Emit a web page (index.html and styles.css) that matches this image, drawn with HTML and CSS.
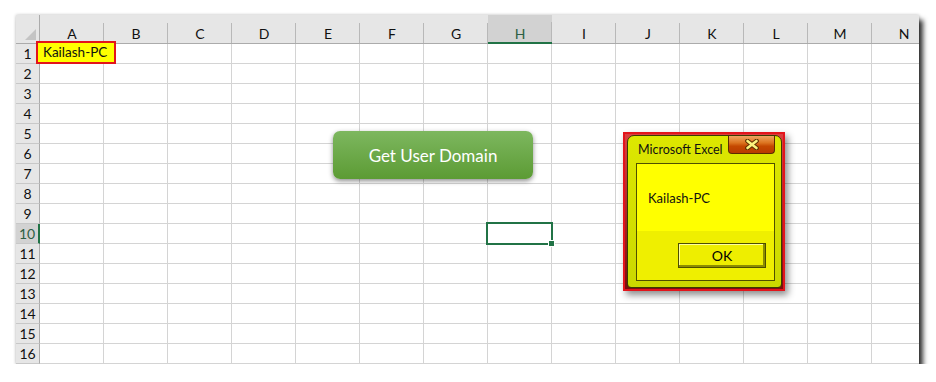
FILE: index.html
```html
<!DOCTYPE html>
<html lang="en">
  <head>
    <meta charset="UTF-8" />
    <meta name="viewport" content="width=device-width, initial-scale=1.0" />
    <title>Get User Domain</title>
    <link rel="stylesheet" href="styles.css">
  </head>
  <body>
    <div class="sheet">
      <div class="grid" id="grid"></div>

      <div class="cell-note">Kailash-PC</div>
      <div class="selection"><span class="fill-handle"></span></div>

      <button class="macro-btn">Get User Domain</button>

      <div class="msgbox">
        <div class="msg-window">
          <div class="msg-title">
            <span>Microsoft Excel</span>
            <span class="msg-close">
              <svg width="14" height="11" viewBox="0 0 14 11">
                <path d="M2.5 2 L11.5 9 M11.5 2 L2.5 9" stroke="#5a2c00" stroke-width="4.6" stroke-linecap="round" />
                <path d="M2.5 2 L11.5 9 M11.5 2 L2.5 9" stroke="#fbf27e" stroke-width="2.6" stroke-linecap="round" />
              </svg>
            </span>
          </div>
          <div class="msg-client">
            <div class="msg-text">Kailash-PC</div>
            <div class="msg-actions">
              <button class="msg-ok">OK</button>
            </div>
          </div>
        </div>
      </div>
    </div>

    <script>
      const grid = document.getElementById("grid");
      const cols = "ABCDEFGHIJKLMN".split("");
      const activeCol = "H";
      const activeRow = 10;

      let html = `<div class="corner"></div>`;
      cols.forEach((c) => {
        html += `<div class="col-head${c === activeCol ? " active" : ""}">${c}</div>`;
      });
      for (let r = 1; r <= 16; r++) {
        html += `<div class="row-head${r === activeRow ? " active" : ""}">${r}</div>`;
        cols.forEach(() => {
          html += `<div class="cell"></div>`;
        });
      }
      grid.innerHTML = html;
    </script>
  </body>
</html>
```

FILE: styles.css
```css
body {
  margin: 0;
  background-color: white;
  font-family: Lato, "Open Sans", sans-serif;
  font-size: 14px;
  color: #111;
}

.sheet {
  position: relative;
  width: 903px;
  height: 349px;
  margin: 15px 0 0 16px;
  overflow: hidden;
  background-color: white;
  box-shadow: 0 0 3px rgba(0, 0, 0, 0.25), 4px 5px 5px rgba(0, 0, 0, 0.8);
}

.grid {
  display: grid;
  grid-template-columns: 24px repeat(14, 64px);
  grid-template-rows: 29px repeat(16, 20px);
}

.grid > div {
  box-sizing: border-box;
}

.corner {
  position: relative;
  background-color: #e6e6e6;
  border-right: 1px solid #ababab;
  border-bottom: 1px solid #ababab;
}

.corner::after {
  content: "";
  position: absolute;
  right: 3px;
  bottom: 3px;
  width: 11px;
  height: 11px;
  background-color: #c4c4c4;
  clip-path: polygon(100% 0, 100% 100%, 0 100%);
}

.col-head {
  padding-top: 9px;
  line-height: 19px;
  text-align: center;
  background: linear-gradient(#b8b8b8, #b8b8b8) right bottom / 1px 20px no-repeat, #e6e6e6;
  border-bottom: 1px solid #ababab;
}

.col-head.active {
  color: #2d5f44;
  background: linear-gradient(#b8b8b8, #b8b8b8) right bottom / 1px 20px no-repeat, #d2d2d2;
  border-bottom: 2px solid #217346;
}

.row-head {
  line-height: 19px;
  text-align: center;
  background-color: #e6e6e6;
  border-right: 1px solid #ababab;
  border-bottom: 1px solid #c8c8c8;
}

.row-head.active {
  color: #2d5f44;
  background-color: #d2d2d2;
  border-right: 2px solid #217346;
}

.cell {
  border-right: 1px solid #d4d4d4;
  border-bottom: 1px solid #d4d4d4;
}

.cell-note {
  position: absolute;
  left: 20px;
  top: 26px;
  width: 80px;
  height: 23px;
  box-sizing: border-box;
  padding-left: 5px;
  font-size: 13.5px;
  line-height: 19px;
  background-color: #ffff00;
  border: 2px solid #e3141b;
}

.selection {
  position: absolute;
  left: 470px;
  top: 207px;
  width: 67px;
  height: 23px;
  box-sizing: border-box;
  border: 2px solid #217346;
}

.fill-handle {
  position: absolute;
  right: -4px;
  bottom: -4px;
  width: 5px;
  height: 5px;
  background-color: #217346;
  border: 1px solid white;
}

.macro-btn {
  position: absolute;
  left: 317px;
  top: 116px;
  width: 200px;
  height: 48px;
  padding: 0;
  border: none;
  border-radius: 7px;
  background: linear-gradient(#7db75f, #5c9b34);
  box-shadow: 0 2px 5px rgba(0, 0, 0, 0.45);
  color: white;
  font-family: Lato, sans-serif;
  font-size: 17px;
}

.msgbox {
  position: absolute;
  left: 607px;
  top: 117px;
  width: 162px;
  height: 159px;
  box-sizing: border-box;
  padding: 1px 1px 1px 2px;
  border: 2px solid #e3141b;
  background: linear-gradient(#d84040, #7a0e0e);
  box-shadow: 3px 4px 7px rgba(0, 0, 0, 0.45);
}

.msg-window {
  display: flex;
  flex-direction: column;
  height: 100%;
  box-sizing: border-box;
  padding: 0 6px 6px 8px;
  border: 1px solid #3b3b00;
  border-radius: 7px 7px 4px 4px;
  background: linear-gradient(#dde700, #cbd800);
}

.msg-title {
  display: flex;
  justify-content: space-between;
  height: 27px;
  padding-left: 2px;
  font-size: 12.5px;
  line-height: 28px;
  color: #111;
}

.msg-close {
  display: flex;
  align-items: center;
  justify-content: center;
  width: 47px;
  height: 18px;
  box-sizing: border-box;
  border: 1px solid #5b2a00;
  border-top: none;
  border-radius: 0 0 4px 4px;
  background: linear-gradient(#eea460 0%, #dc7420 40%, #c44800 60%, #b83c00 100%);
}

.msg-client {
  flex: 1;
  border: 1px solid #4f4f00;
  background: linear-gradient(#ffff00 0 67px, #efef00 67px);
}

.msg-text {
  height: 67px;
  display: flex;
  align-items: center;
  padding-left: 11px;
  font-size: 13px;
}

.msg-actions {
  display: flex;
  justify-content: flex-end;
  padding: 12px 8px 0 0;
}

.msg-ok {
  width: 88px;
  height: 25px;
  padding: 0;
  border: 1px solid #4d4d00;
  background-color: #eeee00;
  box-shadow: inset -2px -2px 0 #8c8c00, inset 1px 1px 0 #ffff9a;
  font-family: Lato, sans-serif;
  font-size: 14px;
  color: #000;
}
```
